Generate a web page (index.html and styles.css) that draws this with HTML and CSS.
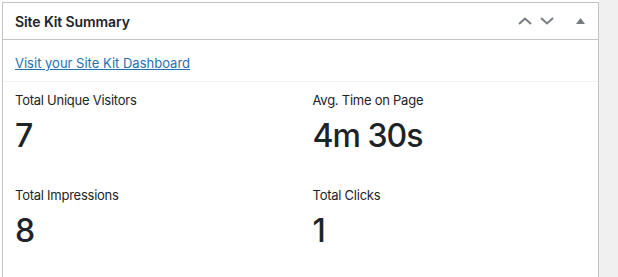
FILE: index.html
```html
<!DOCTYPE html>
<html lang="en">
<head>
    <meta charset="UTF-8">
    <title>Site Kit Summary</title>
    <link rel="stylesheet" href="styles.css">
</head>
<body>
    <div class="screen">
        <!-- 小工具面板 -->
        <div class="postbox">
            <div class="postbox-header">
                <h2 class="postbox-title">Site Kit Summary</h2>
                <div class="handle-actions">
                    <span class="handle-btn">
                        <svg width="14" height="8" viewBox="0 0 14 8"><path d="M1 7 L7 1.5 L13 7" fill="none" stroke="#787c82" stroke-width="2"/></svg>
                    </span>
                    <span class="handle-btn">
                        <svg width="14" height="8" viewBox="0 0 14 8"><path d="M1 1 L7 6.5 L13 1" fill="none" stroke="#787c82" stroke-width="2"/></svg>
                    </span>
                    <span class="handle-btn toggle">
                        <svg width="9" height="6" viewBox="0 0 9 6"><path d="M0 6 L4.5 0 L9 6 Z" fill="#787c82"/></svg>
                    </span>
                </div>
            </div>

            <div class="link-row">
                <a href="#" class="dash-link">Visit your Site Kit Dashboard</a>
            </div>

            <!-- 数据 -->
            <div class="stats">
                <div class="stat">
                    <div class="stat-label">Total Unique Visitors</div>
                    <div class="stat-value">7</div>
                </div>
                <div class="stat">
                    <div class="stat-label">Avg. Time on Page</div>
                    <div class="stat-value">4m 30s</div>
                </div>
                <div class="stat">
                    <div class="stat-label">Total Impressions</div>
                    <div class="stat-value">8</div>
                </div>
                <div class="stat">
                    <div class="stat-label">Total Clicks</div>
                    <div class="stat-value">1</div>
                </div>
            </div>
        </div>

        <div class="side-gap"></div>
    </div>
</body>
</html>
```

FILE: styles.css
```css
/* 页面整体 */
html, body {
    margin: 0;
    height: 100%;
}

body {
    font-family: Inter, "Liberation Sans", Arial, sans-serif;
    background: #ffffff;
    color: #1d2327;
    overflow: hidden;
}

.screen {
    display: flex;
    height: 100%;
    padding: 2px 0 0 2px;
    box-sizing: border-box;
}

/* 面板 */
.postbox {
    width: 597px;
    box-sizing: border-box;
    background: #ffffff;
    border: 1px solid #c3c4c7;
    border-bottom: none;
    flex-shrink: 0;
}

.side-gap {
    flex: 1;
    background: #f0f0f1;
    margin-top: -2px;
}

/* 标题栏 */
.postbox-header {
    display: flex;
    align-items: center;
    justify-content: space-between;
    height: 36px;
    border-bottom: 1px solid #c3c4c7;
}

.postbox-title {
    margin: 0;
    padding-left: 12px;
    font-size: 14px;
    font-weight: 600;
    letter-spacing: -0.1px;
}

.handle-actions {
    display: flex;
    align-items: center;
}

.handle-btn {
    display: flex;
    align-items: center;
    justify-content: center;
    width: 22px;
    height: 20px;
}

.handle-btn.toggle {
    width: 36px;
    margin-left: 4px;
}

/* 链接行 */
.link-row {
    padding: 12px 12px 0;
    height: 29px;
    border-bottom: 1px solid #f0f0f1;
}

.dash-link {
    font-size: 13px;
    color: #2271b1;
    text-decoration: underline;
}

/* 数据网格 */
.stats {
    display: grid;
    grid-template-columns: 1fr 1fr;
}

.stat {
    padding: 9px 12px 0;
    height: 86px;
}

.stat-label {
    font-size: 13px;
    line-height: 18px;
    letter-spacing: -0.25px;
    color: #1d2327;
}

.stat-value {
    margin-top: 9px;
    font-size: 32px;
    line-height: 36px;
    font-weight: 500;
    letter-spacing: -1px;
    color: #1d2327;
}
```
